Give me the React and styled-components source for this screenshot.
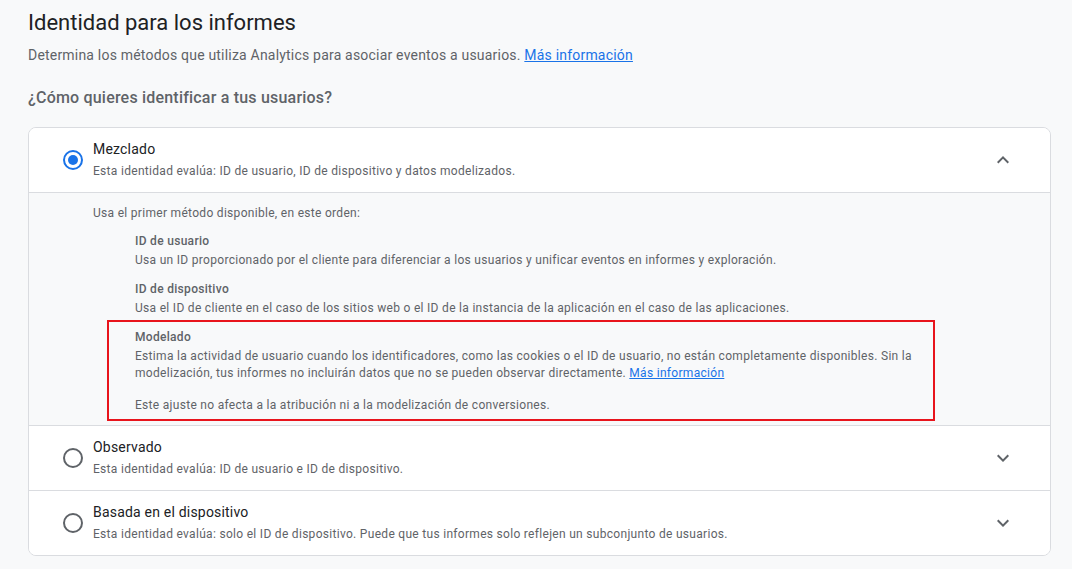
import React from "react";
import styled, { createGlobalStyle } from "styled-components";

const Global = createGlobalStyle`
  html, body {
    margin: 0;
    padding: 0;
    background: #f8f9fa;
    font-family: Roboto, "Noto Sans", Arial, sans-serif;
    -webkit-font-smoothing: antialiased;
  }
`;

const Page = styled.div`
  padding: 9px 21px 14px 28px;
`;

const Title = styled.h1`
  margin: 0;
  font-size: 22px;
  line-height: 28px;
  font-weight: 400;
  color: #202124;
`;

const Lead = styled.p`
  margin: 8px 0 0;
  font-size: 14px;
  line-height: 20px;
  letter-spacing: 0.2px;
  color: #5f6368;
`;

const Link = styled.a`
  color: #1a73e8;
  text-decoration: underline;
  cursor: pointer;
`;

const Question = styled.h2`
  margin: 21px 0 0;
  font-size: 16px;
  line-height: 24px;
  font-weight: 500;
  letter-spacing: 0.2px;
  color: #5f6368;
`;

const Card = styled.div`
  margin-top: 17px;
  border: 1px solid #dadce0;
  border-radius: 8px;
  background: #fff;
  overflow: hidden;
`;

const Option = styled.div`
  & + & {
    border-top: 1px solid #dadce0;
  }
`;

const Header = styled.div`
  display: flex;
  align-items: center;
  height: 64px;
  padding: 0 35px 0 34px;
  background: #fff;
  box-sizing: border-box;
`;

const Radio = styled.span`
  flex: none;
  width: 20px;
  height: 20px;
  box-sizing: border-box;
  border-radius: 50%;
  border: 2px solid ${(p) => (p.$checked ? "#1a73e8" : "#5f6368")};
  display: flex;
  align-items: center;
  justify-content: center;

  &::after {
    content: "";
    display: ${(p) => (p.$checked ? "block" : "none")};
    width: 10px;
    height: 10px;
    border-radius: 50%;
    background: #1a73e8;
  }
`;

const Labels = styled.div`
  flex: 1;
  margin-left: 10px;
`;

const OptionTitle = styled.div`
  font-size: 14px;
  line-height: 20px;
  letter-spacing: 0.2px;
  color: #202124;
`;

const OptionDesc = styled.div`
  margin-top: 2px;
  font-size: 12px;
  line-height: 20px;
  letter-spacing: 0.3px;
  color: #5f6368;
`;

const Chevron = styled.svg`
  flex: none;
  width: 24px;
  height: 24px;
  fill: #5f6368;
`;

const Panel = styled.div`
  border-top: 1px solid #dadce0;
  background: #f8f9fa;
  padding: 12px 0 4px;
  font-size: 12px;
  line-height: 16px;
  letter-spacing: 0.3px;
  color: #5f6368;
`;

const Intro = styled.div`
  padding-left: 64px;
`;

const Methods = styled.div`
  margin-top: 12px;
  padding-left: 106px;
  display: flex;
  flex-direction: column;
  gap: 13px;
`;

const Method = styled.div``;

const MethodName = styled.div`
  font-weight: 500;
  color: #5f6368;
`;

const MethodText = styled.div`
  margin-top: 3px;
  line-height: ${(p) => (p.$tall ? "17px" : "16px")};

  & + & {
    margin-top: 15px;
  }
`;

const Highlight = styled.div`
  margin: 4px 115px 0 78px;
  border: 2px solid #e8141c;
  padding: 7px 14px 5px 26px;
`;

const ExpandMore = () => (
  <Chevron viewBox="0 0 24 24">
    <path d="M16.59 8.59L12 13.17 7.41 8.59 6 10l6 6 6-6z" />
  </Chevron>
);

const ExpandLess = () => (
  <Chevron viewBox="0 0 24 24">
    <path d="M12 8l-6 6 1.41 1.41L12 10.83l4.59 4.58L18 14z" />
  </Chevron>
);

const methods = [
  {
    name: "ID de usuario",
    text: "Usa un ID proporcionado por el cliente para diferenciar a los usuarios y unificar eventos en informes y exploración.",
  },
  {
    name: "ID de dispositivo",
    text: "Usa el ID de cliente en el caso de los sitios web o el ID de la instancia de la aplicación en el caso de las aplicaciones.",
  },
];

export default function App() {
  return (
    <>
      <Global />
      <Page>
        <Title>Identidad para los informes</Title>
        <Lead>
          Determina los métodos que utiliza Analytics para asociar eventos a usuarios.{" "}
          <Link>Más información</Link>
        </Lead>
        <Question>¿Cómo quieres identificar a tus usuarios?</Question>

        <Card>
          <Option>
            <Header>
              <Radio $checked />
              <Labels>
                <OptionTitle>Mezclado</OptionTitle>
                <OptionDesc>
                  Esta identidad evalúa: ID de usuario, ID de dispositivo y datos modelizados.
                </OptionDesc>
              </Labels>
              <ExpandLess />
            </Header>
            <Panel>
              <Intro>Usa el primer método disponible, en este orden:</Intro>
              <Methods>
                {methods.map((m) => (
                  <Method key={m.name}>
                    <MethodName>{m.name}</MethodName>
                    <MethodText>{m.text}</MethodText>
                  </Method>
                ))}
              </Methods>
              <Highlight>
                <MethodName>Modelado</MethodName>
                <MethodText $tall>
                  Estima la actividad de usuario cuando los identificadores, como las cookies o el ID
                  de usuario, no están completamente disponibles. Sin la modelización, tus informes no
                  incluirán datos que no se pueden observar directamente. <Link>Más información</Link>
                </MethodText>
                <MethodText $tall>
                  Este ajuste no afecta a la atribución ni a la modelización de conversiones.
                </MethodText>
              </Highlight>
            </Panel>
          </Option>

          <Option>
            <Header>
              <Radio />
              <Labels>
                <OptionTitle>Observado</OptionTitle>
                <OptionDesc>Esta identidad evalúa: ID de usuario e ID de dispositivo.</OptionDesc>
              </Labels>
              <ExpandMore />
            </Header>
          </Option>

          <Option>
            <Header>
              <Radio />
              <Labels>
                <OptionTitle>Basada en el dispositivo</OptionTitle>
                <OptionDesc>
                  Esta identidad evalúa: solo el ID de dispositivo. Puede que tus informes solo
                  reflejen un subconjunto de usuarios.
                </OptionDesc>
              </Labels>
              <ExpandMore />
            </Header>
          </Option>
        </Card>
      </Page>
    </>
  );
}
